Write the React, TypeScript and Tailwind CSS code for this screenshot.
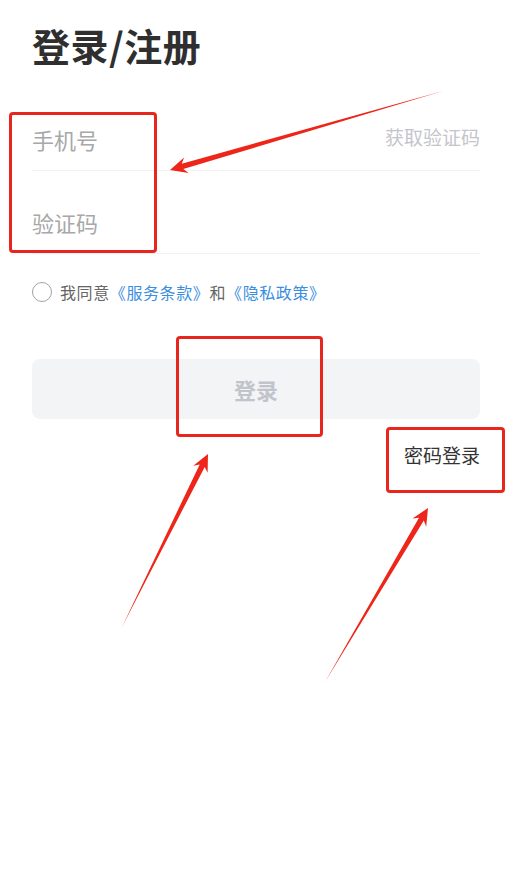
import React from "react"

type Pt = [number, number]

// tapered annotation arrow: thin tail, solid head at the tip
function arrowPoints(tail: Pt, tip: Pt, headLen = 17, headHalf = 8, shaft = 2.8) {
  const dx = tip[0] - tail[0]
  const dy = tip[1] - tail[1]
  const len = Math.hypot(dx, dy)
  const ux = dx / len
  const uy = dy / len
  const nx = -uy
  const ny = ux
  const bx = tip[0] - ux * headLen
  const by = tip[1] - uy * headLen
  const nkx = tip[0] - ux * (headLen - 4)
  const nky = tip[1] - uy * (headLen - 4)
  const pts: Pt[] = [
    tail,
    [nkx + nx * shaft, nky + ny * shaft],
    [bx + nx * headHalf, by + ny * headHalf],
    tip,
    [bx - nx * headHalf, by - ny * headHalf],
    [nkx - nx * shaft, nky - ny * shaft],
  ]
  return pts.map((p) => `${p[0].toFixed(1)},${p[1].toFixed(1)}`).join(" ")
}

const arrows: { tail: Pt; tip: Pt }[] = [
  { tail: [443, 91], tip: [170, 170] },
  { tail: [122, 627], tip: [208, 454] },
  { tail: [325, 682], tip: [428, 508] },
]

export default function App() {
  return (
    <div className="relative min-h-[882px] w-[514px] bg-white font-['Noto_Sans_CJK_SC',sans-serif]">
      <div className="pl-8 pr-[34px]">
        {/* Title */}
        <h1 className="pt-[23px] text-[38px] leading-[44px] font-bold tracking-[0.5px] text-[#2f2f2f]">
          登录/注册
        </h1>

        {/* Phone */}
        <div className="mt-[45px] flex h-[59px] items-center justify-between border-b border-[#f2f2f2] pb-[5px]">
          <span className="text-[22px] leading-[28px] text-[#a8a8a8]">手机号</span>
          <span className="mb-[4px] text-[19px] leading-[24px] text-[#c4c5cb]">获取验证码</span>
        </div>

        {/* Code */}
        <div className="mt-[22px] flex h-[61px] items-center border-b border-[#f2f2f2] pb-[3px]">
          <span className="text-[22px] leading-[28px] text-[#a8a8a8]">验证码</span>
        </div>

        {/* Agreement */}
        <div className="mt-[28px] flex h-5 items-center gap-2">
          <span className="h-5 w-5 rounded-full border border-[#a2a2aa]" />
          <p className="text-[16px] leading-5 tracking-[0.6px] text-[#666]">
            我同意<span className="text-[#3a8ee0]">《服务条款》</span>和
            <span className="text-[#3a8ee0]">《隐私政策》</span>
          </p>
        </div>

        {/* Login button */}
        <button className="mt-[57px] flex h-[60px] w-full items-center justify-center rounded-lg bg-[#f3f4f6] text-[22px] font-bold text-[#c1c4cb]">
          登录
        </button>

        <div className="mt-6 text-right text-[19px] leading-6 text-[#333]">密码登录</div>
      </div>

      {/* Annotation boxes */}
      <div className="absolute left-[9px] top-[112px] h-[141px] w-[148px] rounded-[4px] border-[3px] border-[#e8261d]" />
      <div className="absolute left-[176px] top-[336px] h-[101px] w-[147px] rounded-[4px] border-[3px] border-[#e8261d]" />
      <div className="absolute left-[386px] top-[427px] h-[66px] w-[119px] rounded-[4px] border-[3px] border-[#e8261d]" />

      {/* Annotation arrows */}
      <svg
        className="pointer-events-none absolute left-0 top-0"
        width={514}
        height={882}
        viewBox="0 0 514 882"
      >
        {arrows.map((a, i) => (
          <polygon key={i} points={arrowPoints(a.tail, a.tip)} fill="#ee2519" />
        ))}
      </svg>
    </div>
  )
}
